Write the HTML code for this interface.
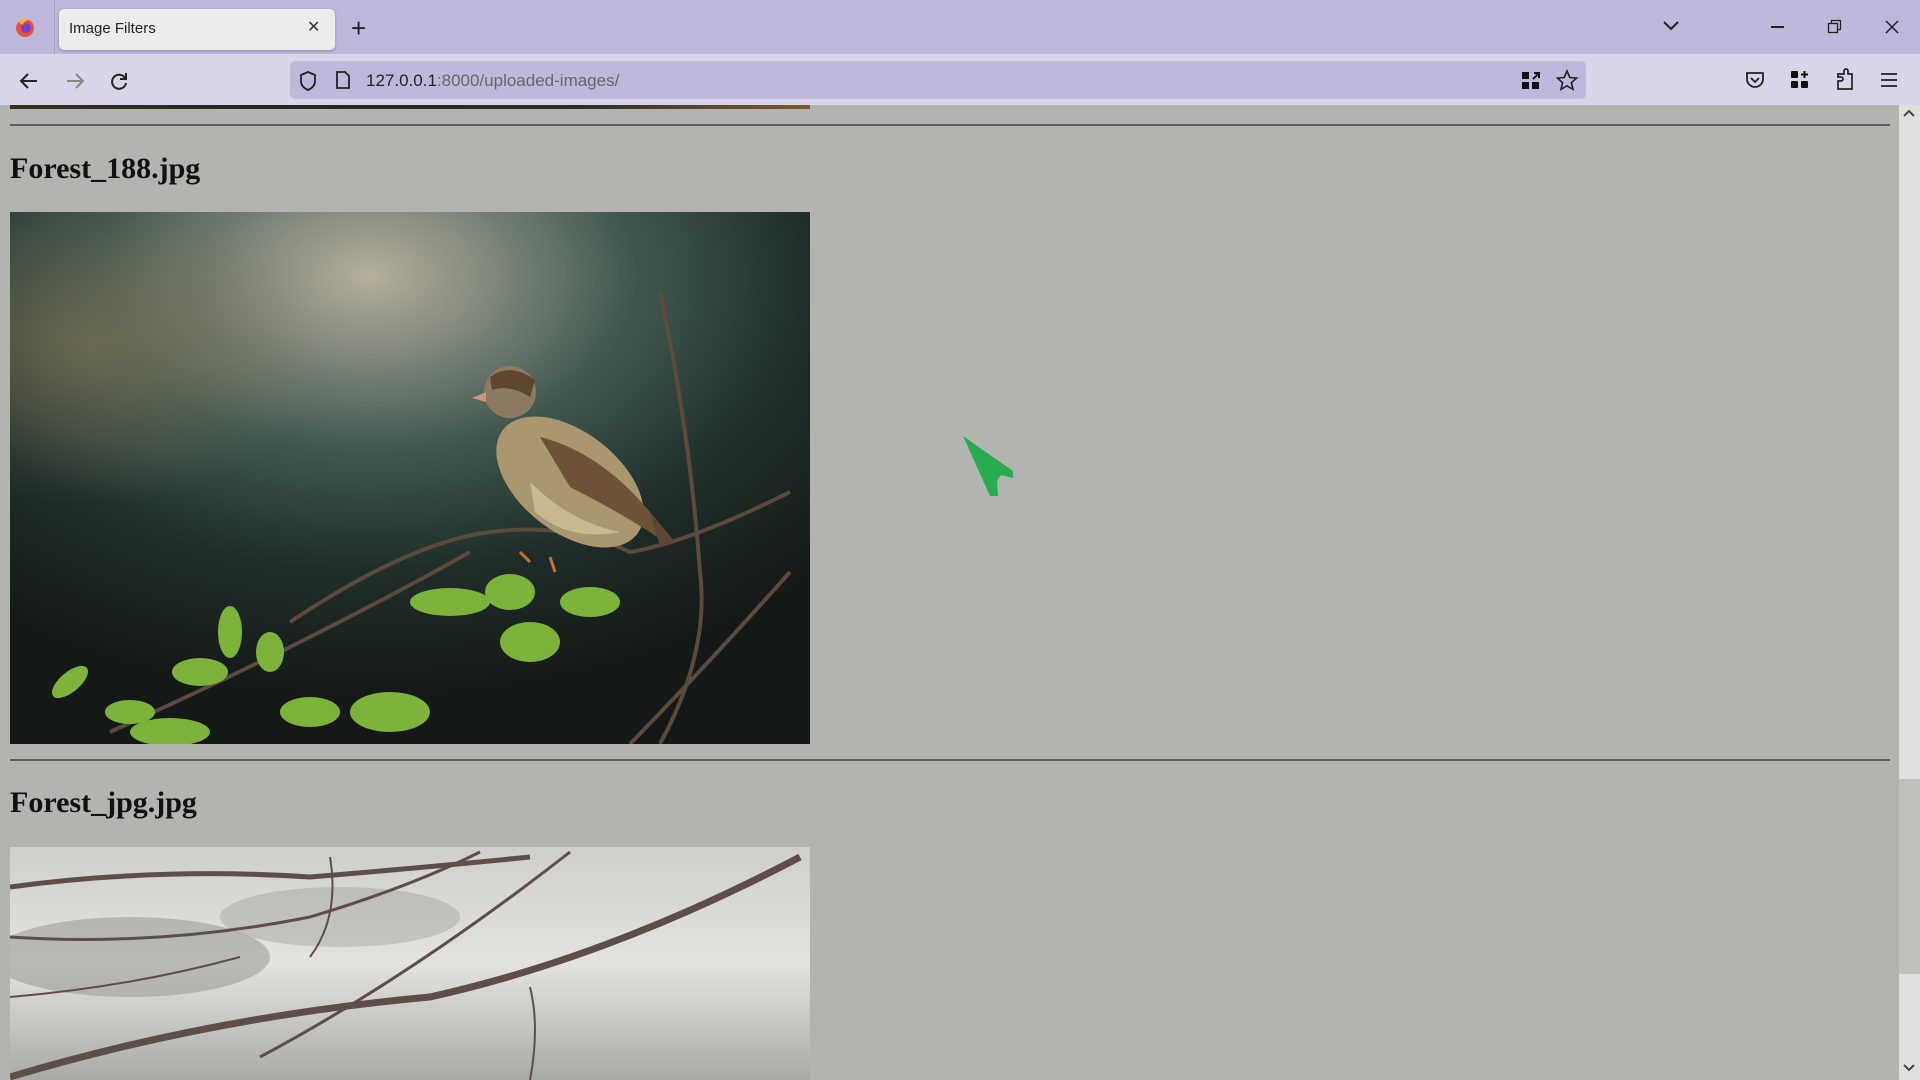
<!DOCTYPE html>
<html><head><meta charset="utf-8"><style>
*{margin:0;padding:0;box-sizing:border-box}
body{width:1920px;height:1080px;overflow:hidden;background:#b3b4b0;font-family:"Liberation Sans",sans-serif;position:relative}
.abs{position:absolute}
h2{position:absolute;left:10px;font:bold 30px "Liberation Serif",serif;color:#111}
.hr{position:absolute;left:10px;width:1880px;height:2px;background:#5e5f5c}
</style></head><body>
<div class="abs" style="left:0;top:0;width:1920px;height:54px;background:#bfb8dd"></div>
<div class="abs" style="left:54px;top:0;width:1px;height:54px;background:#aaa3c8"></div>
<svg class="abs" style="left:14px;top:16px" width="22" height="22" viewBox="0 0 22 22"><circle cx="11" cy="12" r="9" fill="#e8513b"/><circle cx="12" cy="12" r="5" fill="#7b3fc6"/><path d="M4 6 Q10 0 16 4 Q10 4 9 9Z" fill="#ffb13b"/></svg>
<div class="abs" style="left:59px;top:9px;width:276px;height:41px;background:#ececec;border-radius:5px;box-shadow:0 1px 3px rgba(0,0,0,.25)"></div>
<div class="abs" style="left:69px;top:20px;font-size:15px;color:#222">Image Filters</div>
<div class="abs" style="left:307px;top:17px;font-size:16px;color:#333">✕</div>
<div class="abs" style="left:351px;top:13px;font-size:26px;color:#222;font-weight:300">+</div>
<svg class="abs" style="left:1662px;top:18px" width="18" height="14"><path d="M2 4 L9 11 L16 4" stroke="#222" stroke-width="2" fill="none"/></svg>
<div class="abs" style="left:1771px;top:26px;width:13px;height:1.5px;background:#222"></div>
<svg class="abs" style="left:1827px;top:19px" width="16" height="16"><rect x="1.5" y="4.5" width="9" height="9" fill="none" stroke="#222" stroke-width="1.3"/><path d="M4.5 4.5V1.5H13.5V10.5H10.5" fill="none" stroke="#222" stroke-width="1.3"/></svg>
<svg class="abs" style="left:1884px;top:19px" width="16" height="16"><path d="M2 2L14 14M14 2L2 14" stroke="#222" stroke-width="1.5"/></svg>

<div class="abs" style="left:0;top:54px;width:1920px;height:51px;background:#d9d4e8"></div>
<svg class="abs" style="left:18px;top:70px" width="22" height="22"><path d="M19 11H4M10 4L3 11L10 18" stroke="#222" stroke-width="2" fill="none"/></svg>
<svg class="abs" style="left:64px;top:70px" width="22" height="22"><path d="M3 11H18M12 4L19 11L12 18" stroke="#888" stroke-width="2" fill="none"/></svg>
<svg class="abs" style="left:108px;top:70px" width="22" height="22"><path d="M17 8A7 7 0 1 0 18 13" stroke="#222" stroke-width="2" fill="none"/><path d="M18 3V9H12" stroke="#222" stroke-width="2" fill="none"/></svg>
<div class="abs" style="left:290px;top:61px;width:1296px;height:38px;background:#bfb8dd;border-radius:5px"></div>
<svg class="abs" style="left:298px;top:70px" width="20" height="22"><path d="M10 2L17 5V11Q17 17 10 20Q3 17 3 11V5Z" stroke="#222" stroke-width="1.8" fill="none"/></svg>
<svg class="abs" style="left:334px;top:70px" width="18" height="20"><path d="M3 2H11L15 6V18H3Z" stroke="#222" stroke-width="1.8" fill="none"/></svg>
<div class="abs" style="left:366px;top:71px;font-size:17px;color:#222">127.0.0.1<span style="color:#666">:8000/uploaded-images/</span></div>
<svg class="abs" style="left:1521px;top:71px" width="20" height="20"><rect x="1" y="1" width="7" height="7" fill="#111"/><rect x="1" y="11" width="7" height="7" fill="#111"/><rect x="11" y="11" width="7" height="7" fill="#111"/><path d="M12 8L18 2M13 2H18V7" stroke="#111" stroke-width="2" fill="none"/></svg>
<svg class="abs" style="left:1555px;top:69px" width="24" height="24"><path d="M12 2L14.8 8.5L21.5 9.1L16.4 13.6L18 20.4L12 16.8L6 20.4L7.6 13.6L2.5 9.1L9.2 8.5Z" stroke="#222" stroke-width="1.6" fill="none"/></svg>
<svg class="abs" style="left:1744px;top:69px" width="22" height="22"><path d="M3 4H19V10A8 8 0 0 1 3 10Z" stroke="#222" stroke-width="1.8" fill="none"/><path d="M7 9L11 13L15 9" stroke="#222" stroke-width="1.8" fill="none"/></svg>
<svg class="abs" style="left:1790px;top:70px" width="20" height="20"><rect x="1" y="1" width="7" height="7" rx="1" fill="#111"/><rect x="1" y="11" width="7" height="7" rx="1" fill="#111"/><rect x="11" y="11" width="7" height="7" rx="1" fill="#111"/><path d="M14.5 1V8M11 4.5H18" stroke="#111" stroke-width="2"/></svg>
<svg class="abs" style="left:1835px;top:68px" width="22" height="24"><path d="M3 21V13H6A2 2 0 0 0 6 9H3V6H9V3A2 2 0 0 1 13 3V6H17V21Z" stroke="#222" stroke-width="1.7" fill="none"/></svg>
<svg class="abs" style="left:1880px;top:71px" width="18" height="18"><path d="M1 3H17M1 9H17M1 15H17" stroke="#222" stroke-width="1.8"/></svg>

<div class="abs" style="left:10px;top:105px;width:800px;height:4px;background:linear-gradient(90deg,#3a3020,#262626 30%,#2b2b2b 70%,#7a5a30)"></div>
<div class="hr" style="top:124px"></div>
<h2 style="top:152px">Forest_188.jpg</h2>

<svg class="abs" style="left:10px;top:212px" width="800" height="532" viewBox="0 0 800 532">
<defs>
<radialGradient id="g1" cx="0.45" cy="0.12" r="0.8"><stop offset="0" stop-color="#b5ae9c"/><stop offset="0.2" stop-color="#7d867a"/><stop offset="0.42" stop-color="#3e564d"/><stop offset="0.7" stop-color="#1f2d29"/><stop offset="1" stop-color="#141816"/></radialGradient>
<radialGradient id="g2" cx="0.1" cy="0.25" r="0.3"><stop offset="0" stop-color="#8a7a5a" stop-opacity=".6"/><stop offset="1" stop-color="#8a7a5a" stop-opacity="0"/></radialGradient>
</defs>
<rect width="800" height="532" fill="url(#g1)"/>
<rect width="800" height="532" fill="url(#g2)"/>
<g stroke="#5a4a40" stroke-width="4" fill="none">
<path d="M280 410Q400 330 480 320Q560 310 620 340Q680 330 780 280"/>
<path d="M650 80Q680 220 690 360Q700 440 650 532"/>
<path d="M100 520Q300 430 460 340"/>
<path d="M780 360Q700 450 620 532"/>
</g>
<ellipse cx="560" cy="270" rx="85" ry="50" transform="rotate(38 560 270)" fill="#a8976f"/>
<path d="M530 225Q590 240 640 300L655 330Q610 300 560 275Z" fill="#6e5238"/>
<path d="M520 270Q560 310 610 320Q560 330 525 300Z" fill="#c8b98f"/>
<circle cx="500" cy="180" r="26" fill="#8c7b62"/>
<path d="M480 165Q500 150 525 168L520 185Q500 172 482 178Z" fill="#5e4630"/>
<path d="M476 180L462 186L476 190Z" fill="#c99a7a"/>
<path d="M640 300L665 330L650 335Z" fill="#5a4632"/>
<path d="M510 340L520 350M540 345L545 360" stroke="#c77033" stroke-width="3"/>
<g fill="#7db33a">
<ellipse cx="60" cy="470" rx="22" ry="10" transform="rotate(-40 60 470)"/>
<ellipse cx="120" cy="500" rx="25" ry="12"/>
<ellipse cx="220" cy="420" rx="12" ry="26"/>
<ellipse cx="190" cy="460" rx="28" ry="14"/>
<ellipse cx="260" cy="440" rx="14" ry="20"/>
<ellipse cx="300" cy="500" rx="30" ry="15"/>
<ellipse cx="440" cy="390" rx="40" ry="14"/>
<ellipse cx="500" cy="380" rx="25" ry="18"/>
<ellipse cx="580" cy="390" rx="30" ry="15"/>
<ellipse cx="520" cy="430" rx="30" ry="20"/>
<ellipse cx="380" cy="500" rx="40" ry="20"/>
<ellipse cx="160" cy="520" rx="40" ry="14"/>
</g>
</svg>

<div class="hr" style="top:759px"></div>
<h2 style="top:786px">Forest_jpg.jpg</h2>

<svg class="abs" style="left:10px;top:847px" width="800" height="233" viewBox="0 0 800 233">
<defs><linearGradient id="g3" x1="0" y1="0" x2="0" y2="1"><stop offset="0" stop-color="#cfcfca"/><stop offset="0.5" stop-color="#e4e4df"/><stop offset="1" stop-color="#a9a9a6"/></linearGradient></defs>
<rect width="800" height="233" fill="url(#g3)"/>
<ellipse cx="120" cy="110" rx="140" ry="40" fill="#8f918a" opacity=".5"/>
<ellipse cx="330" cy="70" rx="120" ry="30" fill="#9a9b94" opacity=".4"/>
<g stroke="#5e4e48" fill="none">
<path d="M0 230Q200 170 420 150Q600 110 790 10" stroke-width="7"/>
<path d="M0 40Q150 20 300 30Q420 20 520 10" stroke-width="5"/>
<path d="M0 90Q150 100 300 70Q400 40 470 5" stroke-width="3"/>
<path d="M250 210Q400 130 560 5" stroke-width="3"/>
<path d="M0 150Q120 140 230 110" stroke-width="2"/>
<path d="M300 110Q330 70 320 10" stroke-width="2"/>
<path d="M520 140Q530 180 520 233" stroke-width="2"/>
</g>
</svg>

<div class="abs" style="left:1899px;top:105px;width:21px;height:975px;background:#dfe0dd"></div>
<div class="abs" style="left:1899px;top:779px;width:21px;height:195px;background:#c0c0ba"></div>
<svg class="abs" style="left:1902px;top:108px" width="14" height="10"><path d="M2 8L7 3L12 8" stroke="#444" stroke-width="2" fill="none"/></svg>
<svg class="abs" style="left:1902px;top:1063px" width="14" height="10"><path d="M2 2L7 7L12 2" stroke="#444" stroke-width="2" fill="none"/></svg>

<svg class="abs" style="left:960px;top:433px" width="60" height="70"><path d="M3 3L53 38L53 45L41 42L37 48L38 63L30 63Z" fill="#27ad50"/></svg>
</body></html>
